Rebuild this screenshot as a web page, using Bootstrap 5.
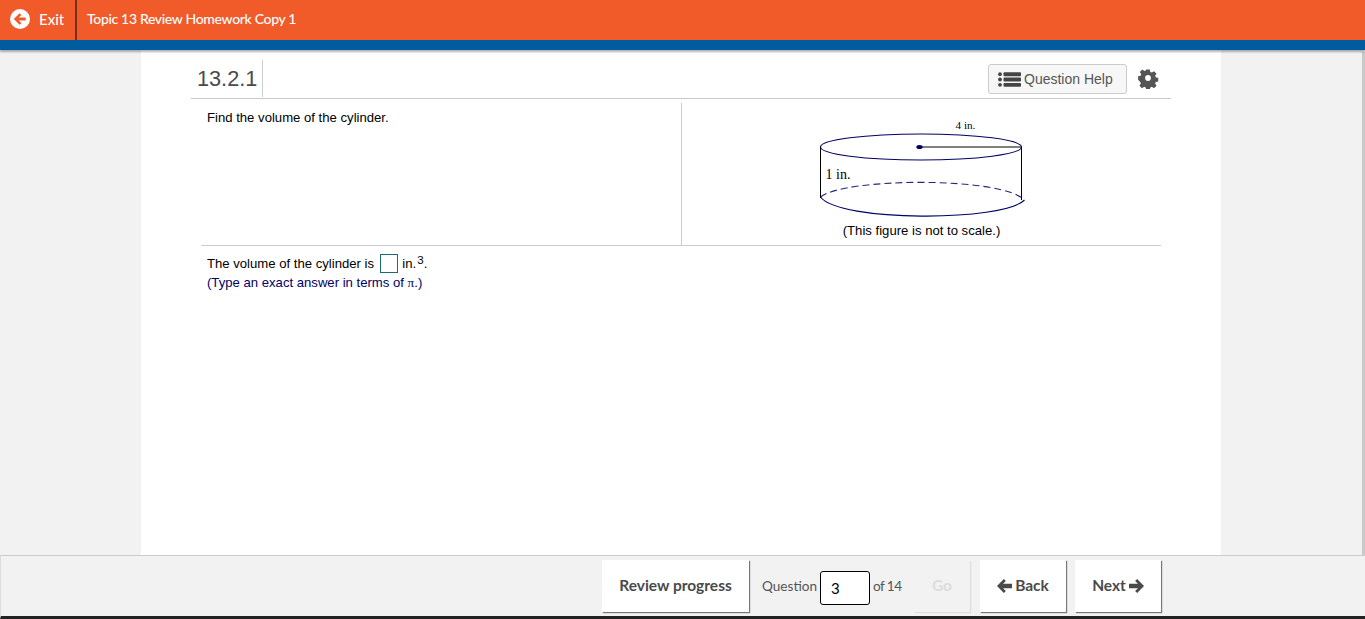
<!DOCTYPE html>
<html lang="en">
<head>
<meta charset="utf-8">
<title>Topic 13 Review Homework Copy 1</title>
<link rel="stylesheet" href="https://cdn.jsdelivr.net/npm/bootstrap@5.3.0/dist/css/bootstrap.min.css">
<style>
html,body{height:619px;overflow:hidden}
body{background:#f2f2f2;font-family:"Liberation Sans",Arial,sans-serif;font-size:13.13px;color:#000}
.app-shell{height:619px}
.top-bar{height:40px;background:#f15a29;color:#fff;font-family:Lato,sans-serif}
.exit-link{width:77px;height:40px;border-right:2px solid #7a2e14;padding:0 0 2px 10px;gap:9px;font-size:15px;font-weight:500;color:#fff;text-decoration:none}
.hw-title{padding:0 0 3px 10px;font-size:14px;font-weight:500;letter-spacing:-.33px}
.blue-bar{height:10px;background:#005c9f;box-shadow:0 2px 2px rgba(0,0,0,.3);position:relative;z-index:1}
.middle{min-height:0}
.sheet{width:1080px;margin-left:141px;background:#fff;padding:0 50px}
.q-head{height:49px;border-bottom:1px solid #c8c8c8;padding-top:10px;padding-left:6px}
.q-num{font-size:21.7px;line-height:37px;height:37px;color:#4a4a4a;padding-right:5px;border-right:1px solid #ccc}
.help-btn{width:139px;height:30px;margin-top:4px;margin-right:10px;padding:0 0 0 9px;gap:3px;background:#f7f7f7;border:1px solid #ccc;border-radius:3px;color:#555;font-size:14px;line-height:1}
.gear-box{margin-right:12px;margin-top:7px;width:22px;height:22px}
.q-body{margin:4px 10px 0;height:143px;border-bottom:1px solid #ccc}
.q-left{width:481px;border-right:1px solid #ccc;padding:5px 6px}
.q-right{width:479px;padding-top:9px}
.fig-cap{line-height:16px;margin-top:5px}
.q-foot{padding:8px 6px 0 6px;margin-left:10px}
.answer-line{line-height:20px;height:20px}
.blank-box{display:inline-block;width:18px;height:19px;border:1px solid #1c6b73;vertical-align:-5px;margin:0 1px 0 2px}
.sup3{font-size:11.5px;position:relative;top:-4px;margin-left:1px}
.hint{color:#000066;line-height:17px}
.pi-glyph{font-family:"Liberation Serif",serif}
.bottom-bar{height:64px;background:#f2f2f2;border-top:1px solid #ccc;border-left:1px solid #ddd;border-bottom:3px solid #222;font-family:Lato,sans-serif;color:#555;padding-left:601px;padding-top:4px;position:relative;z-index:2;flex:none}
.foot-btn{height:52px;background:#fff;border:0;border-radius:0;box-shadow:1px 1px 1px #777;color:#4a4a4a;font-weight:700;font-size:15.5px;padding:0;gap:2px}
.btn-review{width:147px}
.btn-go{width:56px;background:#f2f2f2;color:#dcdcdc;box-shadow:1px 1px 1px #ddd}
.btn-back{width:86px;margin-left:10px;gap:3px}
.btn-next{width:86px;margin-left:9px;gap:3px}
.q-label{margin-left:13px;width:152px;height:52px;padding-top:4px;font-size:13.6px}
.q-txt{padding-bottom:3px}
.q-of{letter-spacing:-.6px}
.q-input{width:50px;height:34px;border:1px solid #000;border-radius:3px;margin:0 3px;padding:0 0 0 10px;font:15px Lato,sans-serif;color:#000;background:#fff}
.scroll-edge{position:absolute;right:0;top:52px;width:3px;height:503px;background:#c9c9c9}
</style>
</head>
<body>
<div class="app-shell d-flex flex-column position-relative">
  <header class="top-bar d-flex align-items-center">
    <a class="exit-link d-flex align-items-center" href="#">
      <svg width="20" height="20" viewBox="0 0 20 20" aria-hidden="true"><circle cx="10" cy="10" r="10" fill="#fff"/><path d="M9.6 4.200 3.800 10l5.800 5.800 1.800-1.800-2.700-2.600h7V8.600h-7l2.700-2.600z" fill="#f15a29"/></svg>
      <span>Exit</span>
    </a>
    <div class="hw-title">Topic 13 Review Homework Copy 1</div>
  </header>
  <div class="blue-bar"></div>
  <main class="middle flex-grow-1 d-flex overflow-hidden">
    <div class="sheet">
      <div class="q-head d-flex justify-content-between align-items-start">
        <div class="q-num">13.2.1</div>
        <div class="d-flex align-items-start">
          <button class="help-btn btn d-flex align-items-center" type="button">
            <svg width="23" height="15" viewBox="0 0 23 15" aria-hidden="true" fill="#444"><circle cx="2" cy="2.200" r="1.900"/><circle cx="2" cy="7.500" r="1.900"/><circle cx="2" cy="12.800" r="1.900"/><rect x="5.500" y="0.300" width="17.500" height="3.900" rx="1"/><rect x="5.500" y="5.600" width="17.500" height="3.900" rx="1"/><rect x="5.500" y="10.900" width="17.500" height="3.900" rx="1"/></svg>
            <span>Question Help</span>
          </button>
          <div class="gear-box">
            <svg width="22" height="22" viewBox="0 0 22 22" aria-hidden="true"><path fill="#555" fill-rule="evenodd" d="M9 1.500h4l.6 2.800 1.700.7 2.400-1.600 2.800 2.800-1.600 2.400.7 1.700 2.800.6v4l-2.800.6-.7 1.700 1.600 2.400-2.800 2.800-2.400-1.600-1.700.7-.6 2.800H9l-.6-2.800-1.700-.7-2.400 1.600-2.800-2.800 1.600-2.400-.7-1.700L0 13v-4l2.800-.6.7-1.700-1.600-2.400 2.800-2.800 2.400 1.600 1.700-.7zM11 7.800a3.200 3.200 0 1 0 0 6.400 3.200 3.200 0 0 0 0-6.400z" transform="translate(1.100 1.100) scale(.9)"/></svg>
          </div>
        </div>
      </div>
      <div class="q-body d-flex">
        <div class="q-left">Find the volume of the cylinder.</div>
        <div class="q-right d-flex flex-column align-items-center">
          <svg width="210" height="106" viewBox="0 -10 210 106" aria-hidden="true">
            <g fill="none" stroke="#000066" stroke-width="1.100">
              <ellipse cx="104" cy="25" rx="100.500" ry="13"/>
              <path d="M3.500 75C26 56 184 54 207.500 78" stroke-dasharray="7 4" opacity=".85"/>
              <path d="M3.500 75C22 100 186 100 207.500 78"/>
            </g>
            <path d="M3.500 25V76M204.500 25V78M102.500 25H204.500" stroke="#000" stroke-width="1" fill="none"/>
            <ellipse cx="102.500" cy="25" rx="3.200" ry="2" fill="#000066"/>
            <text x="138.500" y="7" font-family="'Liberation Serif',serif" font-size="11.2" fill="#000">4 in.</text>
            <text x="8.500" y="57" font-family="'Liberation Serif',serif" font-size="14" fill="#000">1 in.</text>
          </svg>
          <div class="fig-cap">(This figure is not to scale.)</div>
        </div>
      </div>
      <div class="q-foot">
        <div class="answer-line">The volume of the cylinder is <span class="blank-box"></span> in.<span class="sup3">3</span>.</div>
        <div class="hint">(Type an exact answer in terms of <span class="pi-glyph">π</span>.)</div>
      </div>
    </div>
    <div class="scroll-edge"></div>
  </main>
  <footer class="bottom-bar d-flex align-items-start">
    <button class="foot-btn btn btn-review" type="button">Review progress</button>
    <div class="d-flex align-items-center q-label">
      <span class="q-txt">Question</span>
      <input class="q-input" type="text" value="3" aria-label="Question number">
      <span class="q-txt q-of">of 14</span>
    </div>
    <button class="foot-btn btn btn-go" type="button">Go</button>
    <button class="foot-btn btn btn-back d-flex align-items-center justify-content-center" type="button">
      <svg width="15" height="14" viewBox="0 0 14 13" aria-hidden="true"><path fill="#4a4a4a" d="M6.400 0 0 6.500 6.400 13l1.900-1.900-2.700-2.500H14V4.400H5.600l2.700-2.500z"/></svg>
      <span>Back</span>
    </button>
    <button class="foot-btn btn btn-next d-flex align-items-center justify-content-center" type="button">
      <span>Next</span>
      <svg width="15" height="14" viewBox="0 0 14 13" aria-hidden="true"><path fill="#4a4a4a" d="M7.600 0 14 6.500 7.600 13l-1.900-1.900 2.700-2.500H0V4.400h8.400L5.700 1.900z"/></svg>
    </button>
  </footer>
</div>
<script src="https://cdn.jsdelivr.net/npm/bootstrap@5.3.0/dist/js/bootstrap.bundle.min.js"></script>
</body>
</html>
